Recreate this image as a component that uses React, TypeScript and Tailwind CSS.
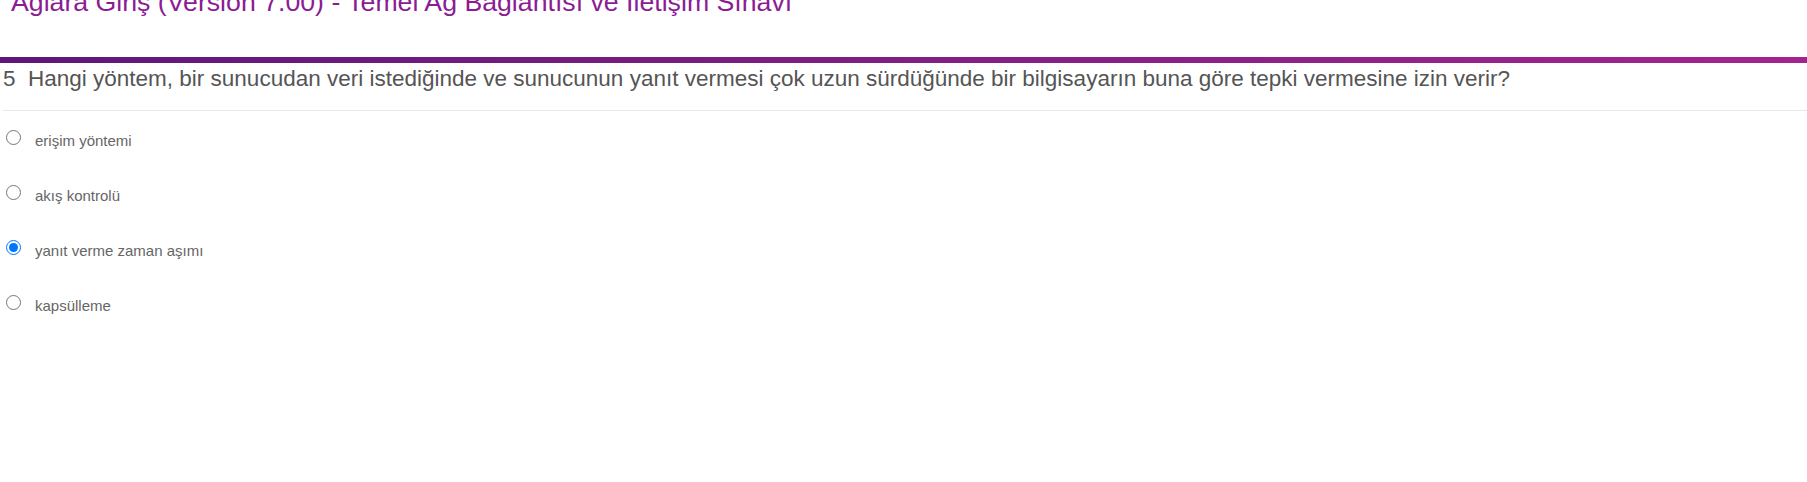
import React from 'react';

const OPTIONS = [
  { label: 'erişim yöntemi', checked: false },
  { label: 'akış kontrolü', checked: false },
  { label: 'yanıt verme zaman aşımı', checked: true },
  { label: 'kapsülleme', checked: false },
];

export default function App() {
  return (
    <div className="w-[1807px] h-[482px] overflow-hidden bg-white font-['Liberation_Sans',Arial,sans-serif]">
      {/* exam title, scrolled partly out of view */}
      <h1 className="mt-[-11px] pl-[11px] text-[26.7px] leading-[26px] font-normal text-[#8b1c93] whitespace-nowrap">
        Ağlara Giriş (Version 7.00) - Temel Ağ Bağlantısı ve İletişim Sınavı
      </h1>

      <div className="mt-[42px] h-[6px] bg-gradient-to-r from-[#5f1679] to-[#a3238f]" />

      <div className="pt-[1px] pl-[3px] text-[22.5px] leading-[30px] text-[#555555] whitespace-nowrap">
        5&nbsp;&nbsp;Hangi yöntem, bir sunucudan veri istediğinde ve sunucunun yanıt vermesi çok uzun sürdüğünde bir bilgisayarın buna göre tepki vermesine izin verir?
      </div>

      <div className="mt-[16px] ml-[3px] h-px bg-[#e8e8e8]" />

      <div className="flex flex-col">
        {OPTIONS.map((opt) => (
          <label key={opt.label} className="flex items-center h-[55px]">
            <input
              type="radio"
              name="q5"
              checked={opt.checked}
              readOnly
              className="w-[15px] h-[15px] ml-[6px] mr-[14px] mb-[2px]"
            />
            <span className="mt-[4px] text-[15px] leading-[17px] text-[#666666]">{opt.label}</span>
          </label>
        ))}
      </div>
    </div>
  );
}
